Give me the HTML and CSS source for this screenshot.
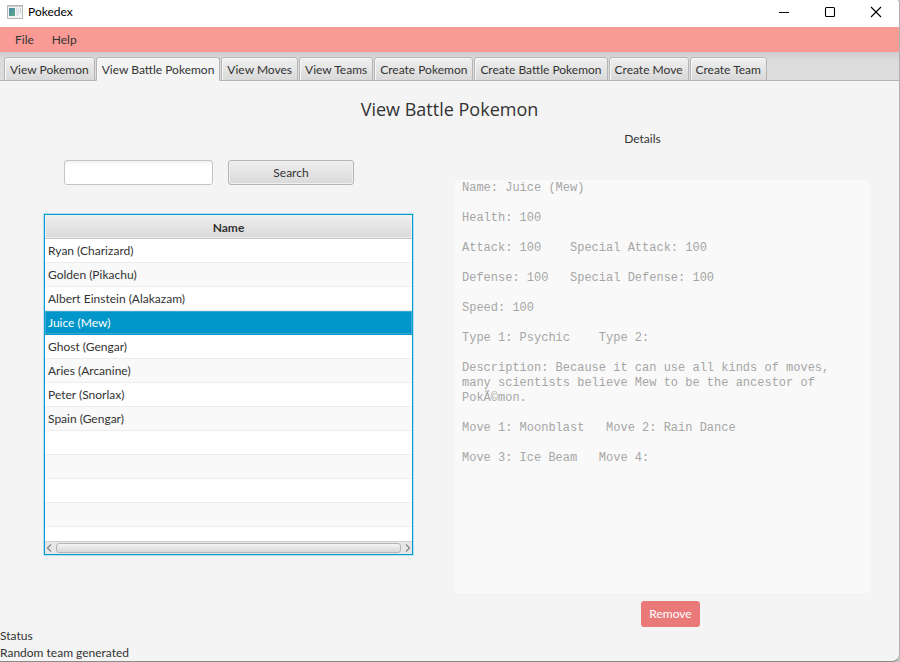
FILE: index.html
```html
<!DOCTYPE html>
<html lang="en">
<head>
<meta charset="utf-8">
<title>Pokedex</title>
<link rel="stylesheet" href="styles.css">
</head>
<body>
<div class="window">
  <header class="titlebar">
    <svg class="app-icon" width="16" height="14" viewBox="0 0 16 14" aria-hidden="true">
      <defs><linearGradient id="pane" x1="0" y1="0" x2="1" y2="1"><stop offset="0" stop-color="#4a83a8"/><stop offset="1" stop-color="#5fae86"/></linearGradient></defs>
      <rect x=".5" y=".5" width="15" height="13" fill="#f4f4f6" stroke="#b4b6ba"/>
      <rect x="1" y="1" width="14" height="1" fill="#c9cbd0"/>
      <rect x="2" y="3" width="6" height="8" fill="url(#pane)"/>
      <rect x="9" y="3" width="3" height="8" fill="#e2e3e8"/>
      <rect x="13" y="3" width="1" height="5" fill="#b9d3c6"/>
    </svg>
    <span class="app-name">Pokedex</span>
    <button class="win-btn" aria-label="Minimize"><svg width="12" height="12" viewBox="0 0 12 12"><path d="M1 6.500h10" stroke="#000"/></svg></button>
    <button class="win-btn" aria-label="Maximize"><svg width="12" height="12" viewBox="0 0 12 12"><rect x="1.500" y="1.500" width="9" height="9" rx="1" fill="none" stroke="#000" stroke-width="1.100"/></svg></button>
    <button class="win-btn" aria-label="Close"><svg width="12" height="12" viewBox="0 0 12 12"><path d="M1 1l10 10M11 1L1 11" stroke="#000" stroke-width="1.100"/></svg></button>
  </header>
  <nav class="menubar">
    <button class="menu">File</button>
    <button class="menu">Help</button>
  </nav>
  <div class="tabs" role="tablist">
    <button class="tab" role="tab">View Pokemon</button>
    <button class="tab active" role="tab" aria-selected="true">View Battle Pokemon</button>
    <button class="tab" role="tab">View Moves</button>
    <button class="tab" role="tab">View Teams</button>
    <button class="tab" role="tab">Create Pokemon</button>
    <button class="tab" role="tab">Create Battle Pokemon</button>
    <button class="tab" role="tab">Create Move</button>
    <button class="tab" role="tab">Create Team</button>
  </div>
  <main class="content">
    <h1 class="heading">View Battle Pokemon</h1>
    <div class="columns">
      <section class="list-side">
        <form class="search">
          <input class="search-box" type="text" aria-label="Search Pokemon">
          <button class="search-btn" type="button">Search</button>
        </form>
        <div class="table-view">
          <table class="names">
            <thead><tr><th>Name</th></tr></thead>
            <tbody>
              <tr><td>Ryan (Charizard)</td></tr>
              <tr><td>Golden (Pikachu)</td></tr>
              <tr><td>Albert Einstein (Alakazam)</td></tr>
              <tr class="selected"><td>Juice (Mew)</td></tr>
              <tr><td>Ghost (Gengar)</td></tr>
              <tr><td>Aries (Arcanine)</td></tr>
              <tr><td>Peter (Snorlax)</td></tr>
              <tr><td>Spain (Gengar)</td></tr>
              <tr><td></td></tr>
              <tr><td></td></tr>
              <tr><td></td></tr>
              <tr><td></td></tr>
              <tr class="partial"><td></td></tr>
            </tbody>
          </table>
          <div class="scrollbar">
            <svg width="6" height="8" viewBox="0 0 6 8"><path d="M5 .5L1.500 4L5 7.500" fill="none" stroke="#888" stroke-width="1.300"/></svg>
            <div class="thumb"></div>
            <svg width="6" height="8" viewBox="0 0 6 8"><path d="M1 .5L4.500 4L1 7.500" fill="none" stroke="#888" stroke-width="1.300"/></svg>
          </div>
        </div>
      </section>
      <section class="detail-side">
        <label class="detail-label" for="details">Details</label>
        <textarea class="details" id="details" disabled>Name: Juice (Mew)

Health: 100

Attack: 100    Special Attack: 100

Defense: 100   Special Defense: 100

Speed: 100

Type 1: Psychic    Type 2:

Description: Because it can use all kinds of moves, many scientists believe Mew to be the ancestor of PokÃ©mon.

Move 1: Moonblast   Move 2: Rain Dance

Move 3: Ice Beam   Move 4:</textarea>
        <button class="remove">Remove</button>
      </section>
    </div>
  </main>
  <footer class="status">
    <div>Status</div>
    <div>Random team generated</div>
  </footer>
</div>
</body>
</html>
```
FILE: styles.css
```css
* { box-sizing: border-box; }
body {
  margin: 0;
  background: #c4c4c4;
  font: 12px/16px Lato, "Open Sans", sans-serif;
  color: #333;
}
button, input { font: inherit; color: inherit; margin: 0; }
.window {
  display: flex;
  flex-direction: column;
  min-height: 100vh;
  background: #f4f4f4;
  border-right: 1px solid #b0b0b0;
  border-bottom: 1px solid #8a8a8a;
  border-radius: 0 4px 8px 0;
  overflow: hidden;
}
.titlebar {
  display: flex;
  align-items: center;
  height: 27px;
  padding: 0 0 4px 7px;
  background: #fff;
  color: #000;
}
.app-name { flex: 1; padding-left: 5px; }
.win-btn {
  display: flex;
  align-items: center;
  justify-content: center;
  width: 46px;
  height: 22px;
  padding: 0;
  border: 0;
  background: none;
}
.menubar {
  display: flex;
  height: 25px;
  padding: 0 6px;
  background: #f99b94;
}
.menu { padding: 1px 9px 0; border: 0; background: none; }
.tabs {
  display: flex;
  align-items: flex-end;
  gap: 1px;
  height: 29px;
  padding: 0 4px;
  background: linear-gradient(#cdcdcd, #dcdcdc 8px);
  box-shadow: inset 0 -1px #b5b5b5;
}
.tab {
  height: 24px;
  padding: 1px 5px 0;
  border: 1px solid #b5b5b5;
  border-radius: 3px 3px 0 0;
  background: linear-gradient(#f0f0f0, #d9d9d9);
  box-shadow: inset 1px 1px #f8f8f8;
  white-space: nowrap;
}
.tab.active { background: #f4f4f4; border-bottom-color: #f4f4f4; }
.content { flex: 1; padding: 16px 29px 0 43px; }
.heading {
  margin: 0 14px 0 0;
  font: 400 18px/25px "Open Sans", sans-serif;
  text-align: center;
}
.columns {
  display: grid;
  grid-template-columns: 371fr 415fr;
  column-gap: 41px;
}
.search {
  display: grid;
  grid-template-columns: 149fr 126fr;
  column-gap: 15px;
  padding: 38px 60px 28px 21px;
}
.search-box {
  width: 100%;
  height: 25px;
  border: 1px solid #c4c4c4;
  border-radius: 3px;
  background: linear-gradient(#f2f2f2, #fff 5px);
}
.search-btn {
  height: 25px;
  padding: 0;
  border: 1px solid #b5b5b5;
  border-radius: 3px;
  background: linear-gradient(#efefef, #d9d9d9);
  box-shadow: inset 0 0 0 1px #f0f0f0;
}
.table-view {
  border: 1px solid #039ed3;
  outline: 1px solid #b5dfed;
  margin: 1px;
  background: #fff;
}
.names { width: 100%; border-collapse: separate; border-spacing: 0; }
.names th {
  height: 24px;
  padding: 2px 0 0;
  border-bottom: 1px solid #c4c4c4;
  background: linear-gradient(#efefef, #d9d9d9);
  box-shadow: inset 0 0 0 1px #f0f0f0;
}
.names td { height: 24px; padding: 0 3px; border-bottom: 1px solid #ededed; }
.names tr:nth-child(even) td { background: #f9f9f9; }
.names tr.selected td {
  background: #0096c9;
  border-color: #0096c9;
  color: #fff;
  box-shadow: inset 0 0 0 1px #39a9d3;
}
.names tr.partial td { height: 14px; border-bottom: 0; }
.scrollbar {
  display: flex;
  align-items: center;
  gap: 4px;
  height: 13px;
  padding: 0 1px;
  border-top: 1px solid #d0d0d0;
  background: #e6e6e6;
}
.thumb {
  flex: 1;
  height: 10px;
  border: 1px solid #b5b5b5;
  border-radius: 3px;
  background: linear-gradient(#f4f4f4, #d9d9d9);
}
.detail-side { display: flex; flex-direction: column; align-items: center; }
.detail-label { padding: 9px 40px 33px 0; }
.details {
  width: 100%;
  height: 413px;
  padding: 1px 7px 0;
  border: 0;
  border-radius: 3px;
  background: #f9f9f9;
  color: #a6a6a6;
  font: 12px/15px "Liberation Mono", monospace;
  resize: none;
}
.remove {
  height: 26px;
  margin: 8px 0 0 16px;
  padding: 0 8px;
  border: 0;
  border-radius: 3px;
  background: #e97a79;
  color: #fff;
}
.status { line-height: 17px; }
```
